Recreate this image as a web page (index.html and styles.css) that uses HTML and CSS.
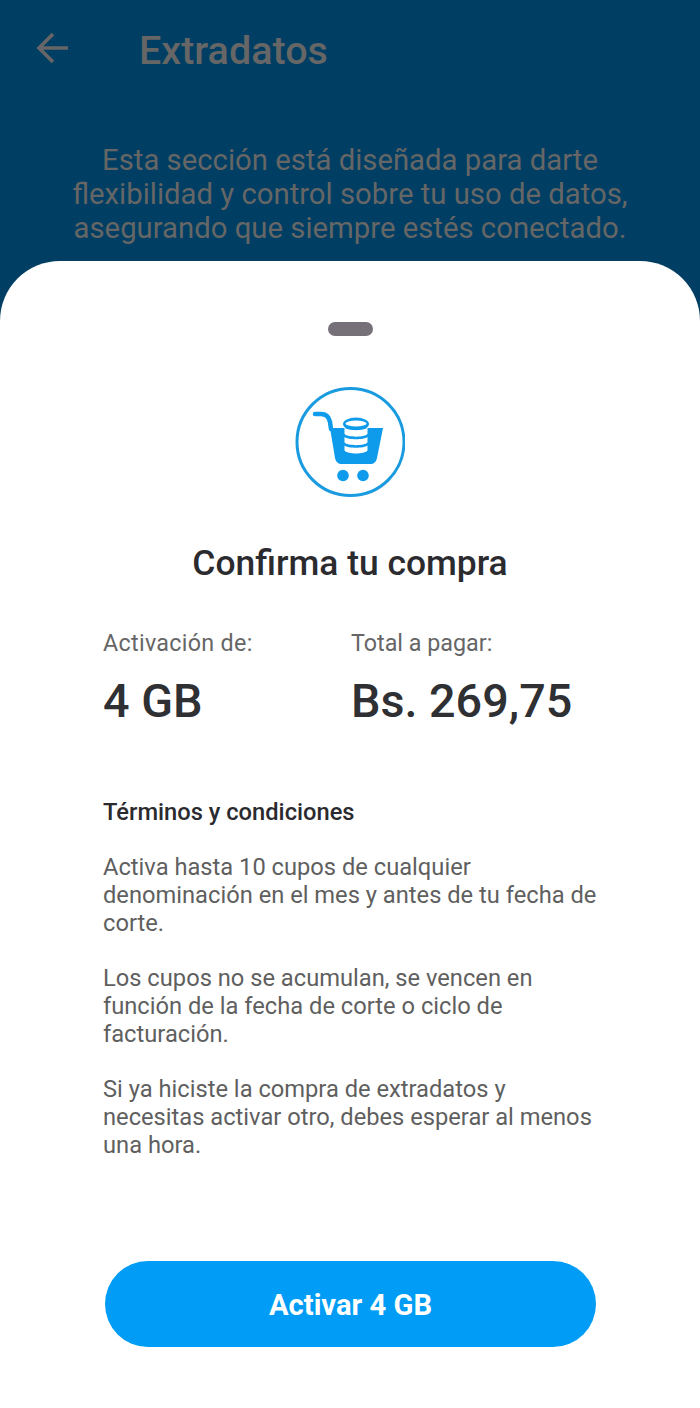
FILE: index.html
```html
<!DOCTYPE html>
<html lang="es">
<head>
    <meta charset="UTF-8">
    <meta name="viewport" content="width=device-width, initial-scale=1.0">
    <title>Extradatos</title>
    <link rel="stylesheet" href="styles.css">
</head>
<body>
    <div class="screen">
        <header class="top-bar">
            <svg class="back-icon" width="36" height="36" viewBox="0 0 36 36" fill="none" stroke="#666" stroke-width="3.600">
                <path d="M35 16H6M20 2L6 16l14 14"/>
            </svg>
            <h1>Extradatos</h1>
        </header>
        <p class="intro">Esta sección está diseñada para darte<br>flexibilidad y control sobre tu uso de datos,<br>asegurando que siempre estés conectado.</p>

        <section class="sheet">
            <div class="handle"></div>
            <svg class="cart-icon" width="110" height="110" viewBox="0 0 110 110">
                <circle cx="55.500" cy="55" r="53.500" fill="none" stroke="#1a9be0" stroke-width="3"/>
                <path d="M20 27h6c5 0 8 3 9 8l1 7" fill="none" stroke="#0f9bec" stroke-width="4.500" stroke-linecap="round"/>
                <path d="M35 41h53l-6 30c-1 4-3 6-7 6H47c-4 0-6-2-7-6z" fill="#0f9bec"/>
                <!-- data stack sitting in the basket -->
                <ellipse cx="61" cy="37" rx="13" ry="6.500" fill="#0f9bec"/>
                <g fill="#fff">
                    <ellipse cx="61" cy="36.500" rx="10.500" ry="3"/>
                    <path d="M49.500 40.500c3 3.500 20 3.500 23 0v6.500c-3 3.500-20 3.500-23 0z"/>
                    <path d="M49.500 50c3 3 20 3 23 0v5.500c-3 3.500-20 3.500-23 0z"/>
                    <path d="M49.500 58.500c3 3 20 3 23 0v5c-3 4-20 4-23 0z"/>
                </g>
                <circle cx="48" cy="88.500" r="5.800" fill="#0f9bec"/>
                <circle cx="68" cy="88.500" r="5.800" fill="#0f9bec"/>
            </svg>
            <h2>Confirma tu compra</h2>

            <div class="summary">
                <div class="summary-col">
                    <span class="summary-label">Activación de:</span>
                    <strong class="summary-value">4 GB</strong>
                </div>
                <div class="summary-col">
                    <span class="summary-label">Total a pagar:</span>
                    <strong class="summary-value">Bs. 269,75</strong>
                </div>
            </div>

            <div class="terms">
                <h3>Términos y condiciones</h3>
                <p>Activa hasta 10 cupos de cualquier<br>denominación en el mes y antes de tu fecha de<br>corte.</p>
                <p>Los cupos no se acumulan, se vencen en<br>función de la fecha de corte o ciclo de<br>facturación.</p>
                <p>Si ya hiciste la compra de extradatos y<br>necesitas activar otro, debes esperar al menos<br>una hora.</p>
            </div>

            <button class="activate-button">Activar 4 GB</button>
        </section>
    </div>
</body>
</html>
```
FILE: styles.css
```css
body {
    margin: 0;
    font-family: Roboto, "Liberation Sans", sans-serif;
    background: #003f63;
}

.screen {
    display: flex;
    flex-direction: column;
    height: 1408px;
    width: 700px;
    overflow: hidden;
}

.top-bar {
    display: flex;
    align-items: center;
    height: 100px;
    padding-left: 33px;
    flex-shrink: 0;
}

.back-icon {
    margin-right: 70px;
}

.top-bar h1 {
    margin: 0;
    font-size: 39.5px;
    font-weight: 500;
    color: #666;
}

.intro {
    margin: 43px 0 0;
    height: 118px;
    text-align: center;
    font-size: 29.3px;
    line-height: 34px;
    color: #666;
}

.sheet {
    flex: 1;
    background: #fff;
    border-radius: 60px 60px 0 0;
    display: flex;
    flex-direction: column;
    padding-top: 61px;
}

.handle {
    width: 45px;
    height: 14px;
    border-radius: 7px;
    background: #767079;
    align-self: center;
}

.cart-icon {
    align-self: center;
    margin-top: 51px;
}

.sheet h2 {
    margin: 44px 0 0;
    text-align: center;
    font-size: 35.4px;
    line-height: 44px;
    font-weight: 500;
    color: #2b2b2f;
}

.summary {
    display: flex;
    padding-left: 103px;
    margin-top: 43px;
}

.summary-col {
    display: flex;
    flex-direction: column;
}

.summary-col:first-child {
    width: 248px;
}

.summary-label {
    font-size: 23.3px;
    line-height: 30px;
    color: #666;
}

.summary-col:first-child .summary-label {
    letter-spacing: 0.3px;
}

.summary-value {
    margin-top: 17px;
    font-size: 46.7px;
    line-height: 52px;
    font-weight: 500;
    color: #2f3033;
}

.terms {
    margin-top: 71px;
    padding-left: 103px;
}

.terms h3 {
    margin: 0 0 27px;
    font-size: 23.7px;
    line-height: 28px;
    font-weight: 500;
    color: #2b2b2f;
}

.terms p {
    margin: 0 0 27px;
    font-size: 23.7px;
    line-height: 28px;
    color: #5f5f5f;
}

.activate-button {
    align-self: center;
    width: 491px;
    height: 86px;
    margin-top: 75px;
    margin-left: 1px;
    padding-top: 3px;
    border: none;
    border-radius: 43px;
    background: #009cf5;
    color: #fff;
    font-family: inherit;
    font-size: 29.2px;
    font-weight: 700;
}
```
